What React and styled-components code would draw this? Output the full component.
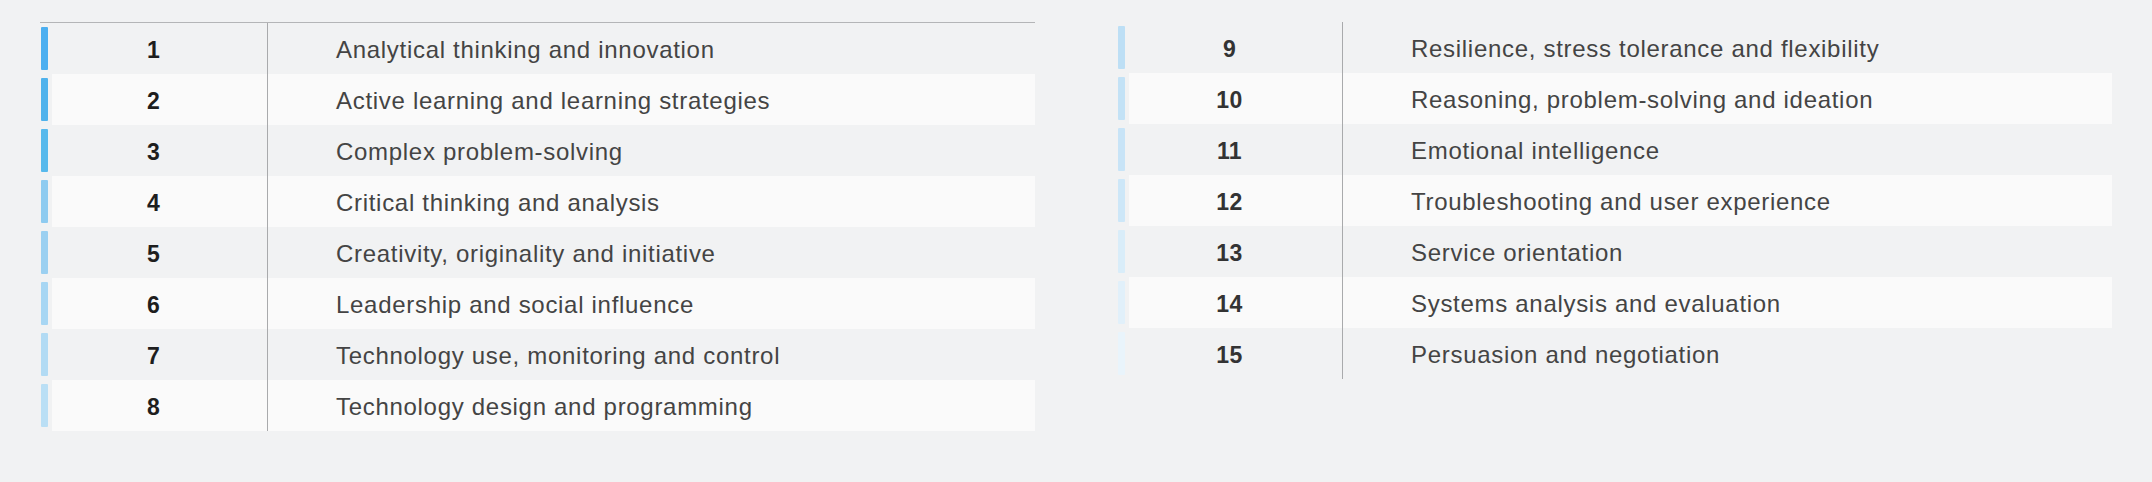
import React from 'react';
import styled, { createGlobalStyle } from 'styled-components';

const GlobalStyle = createGlobalStyle`
  html, body {
    margin: 0;
    padding: 0;
    background: #f1f2f3;
  }
  body {
    font-family: 'Liberation Sans', Arial, sans-serif;
  }
`;

const left = [
  ['1', 'Analytical thinking and innovation', '#4caff0'],
  ['2', 'Active learning and learning strategies', '#4fb2ec'],
  ['3', 'Complex problem-solving', '#57b9ec'],
  ['4', 'Critical thinking and analysis', '#8ecbf0'],
  ['5', 'Creativity, originality and initiative', '#9bd0f1'],
  ['6', 'Leadership and social influence', '#a7d6f3'],
  ['7', 'Technology use, monitoring and control', '#b2dbf4'],
  ['8', 'Technology design and programming', '#badff5'],
];

const right = [
  ['9', 'Resilience, stress tolerance and flexibility', '#bddff5'],
  ['10', 'Reasoning, problem-solving and ideation', '#c3e2f6'],
  ['11', 'Emotional intelligence', '#c8e4f7'],
  ['12', 'Troubleshooting and user experience', '#cde7f8'],
  ['13', 'Service orientation', '#d9edf9'],
  ['14', 'Systems analysis and evaluation', '#e1f0fa'],
  ['15', 'Persuasion and negotiation', '#e9f4fb'],
];

const Page = styled.div`
  display: flex;
  gap: 82px;
  padding: 22px 0 0 40px;
`;

const Table = styled.div`
  width: 995px;
  display: flex;
  flex-direction: column;
  border-top: ${(p) => (p.$ruled ? '1px solid #b4b5b7' : 'none')};
`;

const Row = styled.div`
  display: flex;
  height: 51px;
`;

const Marker = styled.div`
  flex: none;
  width: 12px;
  padding: 4px 0 4px 1px;
  box-sizing: border-box;
`;

const Bar = styled.div`
  width: 7px;
  height: 100%;
  border-radius: 1px;
  background: ${(p) => p.$color};
`;

const Body = styled.div`
  flex: 1;
  display: grid;
  grid-template-columns: ${(p) => p.$rankWidth}px 1fr;
  background: ${(p) => (p.$alt ? '#fafafa' : '#f1f2f3')};
`;

const Rank = styled.div`
  display: flex;
  align-items: center;
  justify-content: center;
  padding: 3px 12px 0 0;
  border-right: 1px solid #a9aaac;
  font-size: 23px;
  font-weight: 700;
  letter-spacing: 0.4px;
  color: ${(p) => p.$tone};
`;

const Label = styled.div`
  display: flex;
  align-items: center;
  padding: 3px 0 0 68px;
  font-size: 24px;
  letter-spacing: 0.7px;
  color: #444;
`;

function SkillTable({ rows, ruled, tone, rankWidth }) {
  return (
    <Table $ruled={ruled}>
      {rows.map(([n, text, color], i) => (
        <Row key={n}>
          <Marker>
            <Bar $color={color} />
          </Marker>
          <Body $alt={i % 2 === 1} $rankWidth={rankWidth}>
            <Rank $tone={tone}>{n}</Rank>
            <Label>{text}</Label>
          </Body>
        </Row>
      ))}
    </Table>
  );
}

export default function App() {
  return (
    <>
      <GlobalStyle />
      <Page>
        <SkillTable rows={left} ruled tone="#1e1e1e" rankWidth={216} />
        <SkillTable rows={right} tone="#333" rankWidth={214} />
      </Page>
    </>
  );
}
